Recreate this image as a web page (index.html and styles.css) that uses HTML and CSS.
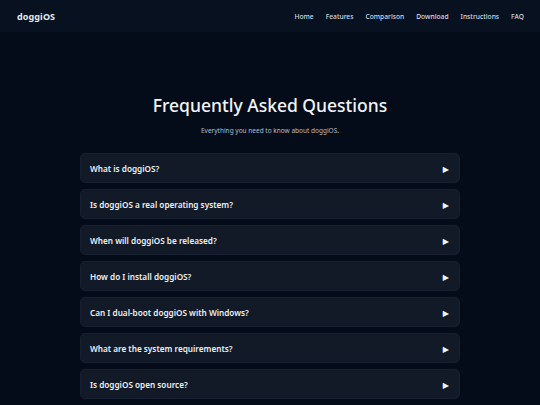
FILE: index.html
```html
<!DOCTYPE html>
<html lang="en">
<head>
<meta charset="utf-8">
<title>doggiOS FAQ</title>
<link rel="stylesheet" href="styles.css">
</head>
<body>
<header class="topbar">
  <div class="logo">doggiOS</div>
  <nav class="nav">
    <a href="#">Home</a>
    <a href="#">Features</a>
    <a href="#">Comparison</a>
    <a href="#">Download</a>
    <a href="#">Instructions</a>
    <a href="#">FAQ</a>
  </nav>
</header>
<main class="faq">
  <h1 class="title">Frequently Asked Questions</h1>
  <p class="subtitle">Everything you need to know about doggiOS.</p>
  <div class="list">
    <div class="item"><span>What is doggiOS?</span><span class="arrow">&#9654;</span></div>
    <div class="item"><span>Is doggiOS a real operating system?</span><span class="arrow">&#9654;</span></div>
    <div class="item"><span>When will doggiOS be released?</span><span class="arrow">&#9654;</span></div>
    <div class="item"><span>How do I install doggiOS?</span><span class="arrow">&#9654;</span></div>
    <div class="item"><span>Can I dual-boot doggiOS with Windows?</span><span class="arrow">&#9654;</span></div>
    <div class="item"><span>What are the system requirements?</span><span class="arrow">&#9654;</span></div>
    <div class="item"><span>Is doggiOS open source?</span><span class="arrow">&#9654;</span></div>
    <div class="item item-edge"></div>
  </div>
</main>
</body>
</html>
```

FILE: styles.css
```css
* { box-sizing: border-box; }
html, body {
  margin: 0;
  padding: 0;
  background: #040c1a;
  color: #e8ecf2;
  font-family: "Noto Sans", "DejaVu Sans", sans-serif;
  overflow: hidden;
  height: 405px;
}
.topbar {
  display: flex;
  align-items: center;
  justify-content: space-between;
  height: 32px;
  padding: 0 16px 0 17px;
  background: #08111f;
}
.logo {
  font-size: 9px;
  font-weight: 700;
  color: #e6eaf0;
  letter-spacing: 0.1px;
}
.nav {
  display: flex;
  gap: 12px;
}
.nav a {
  color: #d4dae3;
  text-decoration: none;
  font-size: 6.7px;
  font-weight: 500;
}
.faq {
  display: flex;
  flex-direction: column;
  align-items: center;
  padding-top: 61px;
}
.title {
  margin: 0;
  font-size: 17.5px;
  font-weight: 500;
  color: #f2f4f7;
  line-height: 24px;
}
.subtitle {
  margin: 9px 0 0;
  font-size: 6.5px;
  color: #b6bdc8;
  line-height: 10px;
}
.list {
  margin-top: 17px;
  width: 380px;
  display: flex;
  flex-direction: column;
  gap: 6px;
}
.item {
  height: 30px;
  flex: none;
  display: flex;
  align-items: center;
  justify-content: space-between;
  padding: 0 10px 0 9px;
  background: #121a27;
  border: 1px solid #172030;
  border-radius: 5px;
  font-size: 8.2px;
  font-weight: 600;
  color: #eef1f5;
}
.arrow {
  font-size: 8px;
  color: #f2f4f7;
}
```
